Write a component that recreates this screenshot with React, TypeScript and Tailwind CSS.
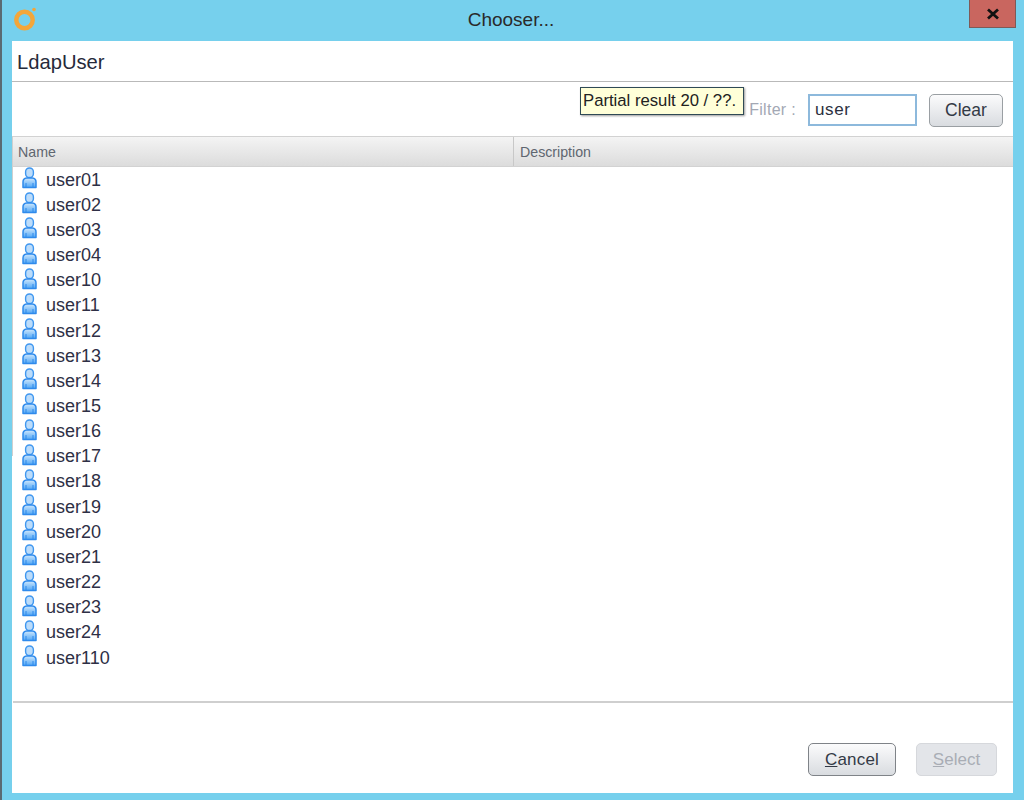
import React from "react";

const users = [
  "user01", "user02", "user03", "user04", "user10", "user11", "user12",
  "user13", "user14", "user15", "user16", "user17", "user18", "user19",
  "user20", "user21", "user22", "user23", "user24", "user110",
];

function UserIcon() {
  return (
    <svg width="15" height="22" viewBox="0 0 15 22" className="shrink-0 mt-[-4px]">
      <defs>
        <linearGradient id="userBody" x1="0" y1="0" x2="0" y2="1">
          <stop offset="0" stopColor="#cfe8fd" />
          <stop offset="1" stopColor="#4fa5f5" />
        </linearGradient>
      </defs>
      <rect x="3.600" y="1" width="7.800" height="9.500" rx="3.800" fill="#bcdcfa" stroke="#3f97f0" strokeWidth="1.400" />
      <path d="M1 20.500v-5.500c0-2.600 1.600-3.800 3.600-4h5.800c2 .2 3.600 1.400 3.600 4v5.500z" fill="url(#userBody)" stroke="#2f8aec" strokeWidth="1.500" strokeLinejoin="round" />
      <path d="M4 20v-4M11 20v-4" stroke="#2f8aec" strokeWidth="1" />
    </svg>
  );
}

function Logo() {
  return (
    <svg width="26" height="26" viewBox="0 0 26 26">
      <circle cx="12.500" cy="14" r="8.200" fill="none" stroke="#f3a63a" strokeWidth="4.500" />
      <circle cx="22" cy="3.500" r="1.800" fill="#f3a63a" />
    </svg>
  );
}

export default function App() {
  return (
    <div
      className="w-[1024px] h-[800px] bg-[#76d0ed] flex flex-col pl-[10px] pr-[11px] pb-[7px] border-l-2 border-[#5a6a72] overflow-hidden relative"
      style={{ fontFamily: '"Liberation Sans", Arial, sans-serif' }}
    >
      {/* title bar */}
      <div className="h-[41px] shrink-0 flex items-center relative">
        <div className="absolute left-[0px] top-[6px]">
          <Logo />
        </div>
        <div className="flex-1 text-center text-[19px] text-[#2a2a2a] pr-[3px]">Chooser...</div>
        <div className="absolute right-[-3px] top-0 w-[47px] h-[28px] bg-[#c9665f] border-x border-b border-[#7d5a58] flex items-center justify-center">
          <svg width="14" height="12" viewBox="0 0 14 12">
            <path d="M2 1.500l10 9M12 1.500l-10 9" stroke="#111" strokeWidth="2.800" />
          </svg>
        </div>
      </div>

      <div className="flex-1 min-h-0 bg-white flex flex-col relative">
        <div className="h-[41px] shrink-0 flex items-center pl-[5px] pt-[3px] text-[20.2px] text-[#262a3a] border-b border-[#b9b9b9]">
          LdapUser
        </div>

        {/* filter row */}
        <div className="h-[54px] shrink-0 flex items-center justify-end pr-[10px] pt-[2px]">
          <span className="text-[16px] text-[#a3a8b4] mr-[12px] tracking-[0.3px]">Filter :</span>
          <div className="w-[109px] h-[32px] border-2 border-[#8db9dc] flex items-center pl-[5px] text-[17px] tracking-[0.6px] text-[#2b3040] mr-[12px]">
            user
          </div>
          <div className="w-[74px] h-[33px] rounded-[5px] border border-[#9a9fa3] bg-gradient-to-b from-[#fbfbfc] to-[#d9dce0] flex items-center justify-center text-[17.500px] text-[#333a46]">
            Clear
          </div>
        </div>

        {/* tooltip */}
        <div className="absolute left-[568px] top-[46px] w-[164px] h-[28px] bg-[#ffffd8] border border-[#2f4a55] shadow-[1px_1px_2px_rgba(0,0,0,0.4)] flex items-center pl-[2px] text-[16.700px] text-[#222] whitespace-nowrap">
          Partial result 20 / ??.
        </div>

        {/* table */}
        <div className="flex-1 min-h-0 flex flex-col border-l border-[#cfcfcf]">
          <div className="h-[31px] shrink-0 flex bg-gradient-to-b from-[#f4f4f4] to-[#dcdcdc] border-t border-b border-[#d2d2d2] text-[14.2px] text-[#5f6670]">
            <div className="w-[501px] flex items-center pl-[5px] pt-[3px] border-r border-[#c8c8c8]">Name</div>
            <div className="flex-1 flex items-center pl-[6px] pt-[3px]">Description</div>
          </div>
          <div className="h-[536px] shrink-0 pt-[0.500px] border-b-2 border-[#cfcfcf]">
            {users.map((u) => (
              <div key={u} className="h-[25.16px] flex items-center pl-[9px] gap-[9px] text-[18px] text-[#2e2f45]">
                <UserIcon />
                <span>{u}</span>
              </div>
            ))}
          </div>
        </div>

        {/* footer */}
        <div className="flex-1 flex items-end justify-end pr-[16px] pb-[17px] gap-[20px]">
          <div className="w-[88px] h-[33px] rounded-[5px] border border-[#7f8388] bg-gradient-to-b from-[#fbfbfc] to-[#d9dce0] flex items-center justify-center text-[17px] tracking-[0.2px] text-[#333a46]">
            <span><span className="underline">C</span>ancel</span>
          </div>
          <div className="w-[81px] h-[33px] rounded-[5px] border border-[#d6d8dc] bg-[#e3e5e9] flex items-center justify-center text-[17px] text-[#a9adb5]">
            <span><span className="underline">S</span>elect</span>
          </div>
        </div>
      </div>
    </div>
  );
}
